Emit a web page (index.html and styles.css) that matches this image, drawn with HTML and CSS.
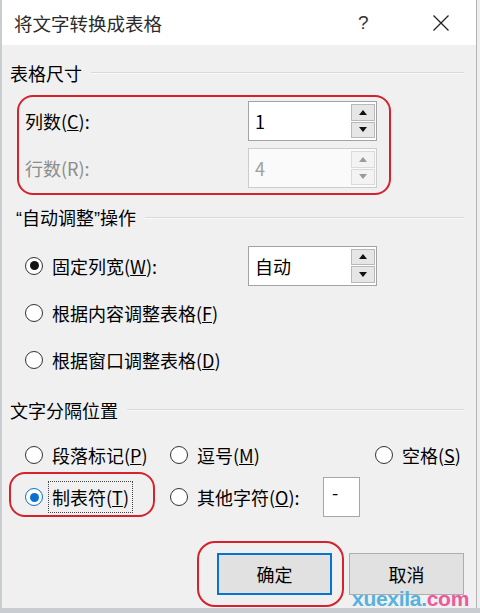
FILE: index.html
```html
<!DOCTYPE html>
<html lang="zh-CN">
<head>
<meta charset="utf-8">
<title>将文字转换成表格</title>
<link rel="stylesheet" href="styles.css">
</head>
<body>
<div class="dialog">
  <div class="titlebar">
    <span class="title">将文字转换成表格</span>
    <span class="help">?</span>
    <span class="close"><svg width="18" height="18" viewBox="0 0 18 18"><path d="M1.5 1.5 L16.5 16.5 M16.5 1.5 L1.5 16.5" stroke="#222" stroke-width="1.3" fill="none"/></svg></span>
  </div>
  <div class="content">
    <div class="group-title g1"><span>表格尺寸</span><i class="rule"></i></div>
    <div class="size-box">
      <div class="field-row">
        <span class="label">列数(<u>C</u>):</span>
        <div class="spin"><span class="val">1</span><div class="spin-btns"><b class="up"></b><b class="down"></b></div></div>
      </div>
      <div class="field-row disabled">
        <span class="label">行数(R):</span>
        <div class="spin"><span class="val">4</span><div class="spin-btns"><b class="up"></b><b class="down"></b></div></div>
      </div>
    </div>

    <div class="group-title g2"><span><span class="q">“</span>自动调整<span class="q">”</span>操作</span><i class="rule"></i></div>
    <div class="radio-row">
      <span class="radio checked"></span><span class="rlabel fixed">固定列宽(<u>W</u>):</span>
      <div class="spin"><span class="val">自动</span><div class="spin-btns"><b class="up"></b><b class="down"></b></div></div>
    </div>
    <div class="radio-row">
      <span class="radio"></span><span class="rlabel">根据内容调整表格(<u>F</u>)</span>
    </div>
    <div class="radio-row">
      <span class="radio"></span><span class="rlabel">根据窗口调整表格(<u>D</u>)</span>
    </div>

    <div class="group-title g3"><span>文字分隔位置</span><i class="rule"></i></div>
    <div class="sep-row r1">
      <div class="opt w1"><span class="radio"></span><span class="rlabel">段落标记(<u>P</u>)</span></div>
      <div class="opt w2"><span class="radio"></span><span class="rlabel">逗号(<u>M</u>)</span></div>
      <div class="opt"><span class="radio"></span><span class="rlabel">空格(<u>S</u>)</span></div>
    </div>
    <div class="sep-row r2">
      <div class="opt w1"><span class="radio blue"></span><span class="rlabel focus">制表符(<u>T</u>)</span><span class="mark m-tab"></span></div>
      <div class="opt w3"><span class="radio"></span><span class="rlabel">其他字符(<u>O</u>):</span></div>
      <div class="textbox">-</div>
    </div>

    <div class="buttons">
      <div class="btn default">确定<span class="mark m-ok"></span></div>
      <div class="btn">取消</div>
    </div>
  </div>
  <div class="watermark"><span class="wm-a">xuexila.</span><span class="wm-b">com</span></div>
</div>
<div class="bottom-strip"></div>
</body>
</html>
```

FILE: styles.css
```css
html, body {
  margin: 0;
  padding: 0;
}
body {
  width: 480px;
  height: 613px;
  background: #eceef0;
  font-family: "Noto Sans CJK SC", "Liberation Sans", sans-serif;
  font-size: 18px;
  color: #000;
  overflow: hidden;
}
.dialog {
  position: relative;
  width: 477px;
  height: 608px;
  box-sizing: border-box;
  background: #f0f0f0;
  border-left: 2px solid #c9ccd1;
  border-right: 1px solid #b4b4b4;
}
.titlebar {
  height: 45px;
  background: #fff;
  display: flex;
  align-items: center;
  padding-left: 12px;
}
.title {
  flex: 1;
  color: #2b2b2b;
  font-size: 18.5px;
}
.help {
  width: 20px;
  margin-right: 54px;
  font-size: 19px;
  color: #333;
  font-family: "Liberation Sans", sans-serif;
}
.close {
  width: 18px;
  height: 18px;
  margin-right: 26px;
  display: flex;
}
.content {
  padding: 0 12px 0 8px;
}
.group-title {
  height: 22px;
  display: flex;
  align-items: center;
  line-height: 22px;
}
.group-title .rule {
  flex: 1;
  height: 1px;
  margin-left: 9px;
  background: #d9d9d9;
  border-bottom: 1px solid #fbfbfb;
}
.q {
  font-family: "Liberation Sans", sans-serif;
}
.g1 { margin-top: 17px; }
.g2 { margin-top: 12px; padding-left: 6px; }
.g3 { margin-top: 16px; }

.size-box {
  margin-top: 11px;
  margin-left: 7px;
  width: 374px;
  height: 100px;
  box-sizing: border-box;
  border: 2px solid #d5222c;
  border-radius: 16px;
  padding: 4px 0 0 6px;
  display: flex;
  flex-direction: column;
  gap: 7px;
}
.field-row {
  display: flex;
  align-items: center;
  height: 40px;
}
.field-row .label {
  width: 223px;
}
.disabled .label { color: #8c8c8c; }

.spin {
  width: 129px;
  height: 40px;
  box-sizing: border-box;
  border: 1px solid #a3a3a3;
  background: #fff;
  display: flex;
  align-items: stretch;
  padding: 1px 1px 1px 6px;
}
.spin .val {
  flex: 1;
  line-height: 36px;
  font-size: 18px;
}
.spin-btns {
  width: 24px;
  display: flex;
  flex-direction: column;
  gap: 1px;
  padding: 1px 0;
}
.spin-btns b {
  flex: 1;
  background: #e6e6e6;
  border: 1px solid #b8b8b8;
  display: flex;
  align-items: center;
  justify-content: center;
}
.spin-btns b::after {
  content: "";
  width: 0;
  height: 0;
  border-left: 4px solid transparent;
  border-right: 4px solid transparent;
}
.spin-btns .up::after { border-bottom: 5px solid #111; }
.spin-btns .down::after { border-top: 5px solid #111; }

.disabled .spin {
  border-color: #cdcdcd;
  background: #fafafa;
}
.disabled .spin .val { color: #a0a0a0; }
.disabled .spin-btns b {
  background: #f3f3f3;
  border-color: #dadada;
}
.disabled .spin-btns .up::after { border-bottom-color: #9a9a9a; }
.disabled .spin-btns .down::after { border-top-color: #9a9a9a; }

.radio-row {
  display: flex;
  align-items: center;
  padding-left: 15px;
  height: 47px;
}
.g2 + .radio-row { margin-top: 13px; }
.radio-row:last-of-type { height: 46px; }
.radio {
  width: 18px;
  height: 18px;
  box-sizing: border-box;
  border: 1.5px solid #333;
  border-radius: 50%;
  background: #fff;
  display: flex;
  align-items: center;
  justify-content: center;
  flex: none;
}
.radio.checked::after {
  content: "";
  width: 9px;
  height: 9px;
  border-radius: 50%;
  background: #111;
}
.radio.blue { border-color: #0a6fd0; }
.radio.blue::after {
  content: "";
  width: 9px;
  height: 9px;
  border-radius: 50%;
  background: #0a6fd0;
}
.rlabel {
  margin-left: 9px;
  white-space: nowrap;
}
.rlabel.fixed { width: 196px; }

.sep-row {
  display: flex;
  align-items: center;
  padding-left: 15px;
  height: 40px;
}
.sep-row.r1 { margin-top: 14px; }
.sep-row.r2 { margin-top: 2px; }
.opt {
  display: flex;
  align-items: center;
  position: relative;
  height: 40px;
}
.w1 { width: 145px; }
.w2 { width: 205px; }
.w3 { width: 153px; }
.rlabel.focus {
  margin-left: 6px;
  padding: 0 3px;
  height: 30px;
  line-height: 30px;
  outline: 1px dotted #444;
}
.textbox {
  width: 37px;
  height: 40px;
  box-sizing: border-box;
  border: 1px solid #a6a6a6;
  background: #fff;
  padding: 4px 0 0 8px;
  line-height: 20px;
}

.mark {
  position: absolute;
  border: 2px solid #d5222c;
  box-sizing: border-box;
  pointer-events: none;
}
.m-tab {
  left: -16px;
  top: -5px;
  width: 146px;
  height: 45px;
  border-radius: 16px;
}

.buttons {
  margin-top: 36px;
  display: flex;
  justify-content: flex-end;
  gap: 17px;
}
.btn {
  position: relative;
  width: 115px;
  height: 42px;
  box-sizing: border-box;
  border: 1px solid #adadad;
  background: #e1e1e1;
  display: flex;
  align-items: center;
  justify-content: center;
}
.btn.default {
  border: 2px solid #0a72cf;
}
.m-ok {
  left: -22px;
  top: -14px;
  width: 147px;
  height: 66px;
  border-radius: 18px;
}

.watermark {
  position: absolute;
  right: 7px;
  bottom: -2px;
  font-family: "Liberation Sans", sans-serif;
  font-size: 21px;
  font-weight: bold;
  line-height: 22px;
  letter-spacing: -0.3px;
}
.wm-a { color: #56b2de; }
.wm-b { color: #ea5a9c; }

.bottom-strip {
  height: 5px;
  background: #c9cdd1;
}
```
